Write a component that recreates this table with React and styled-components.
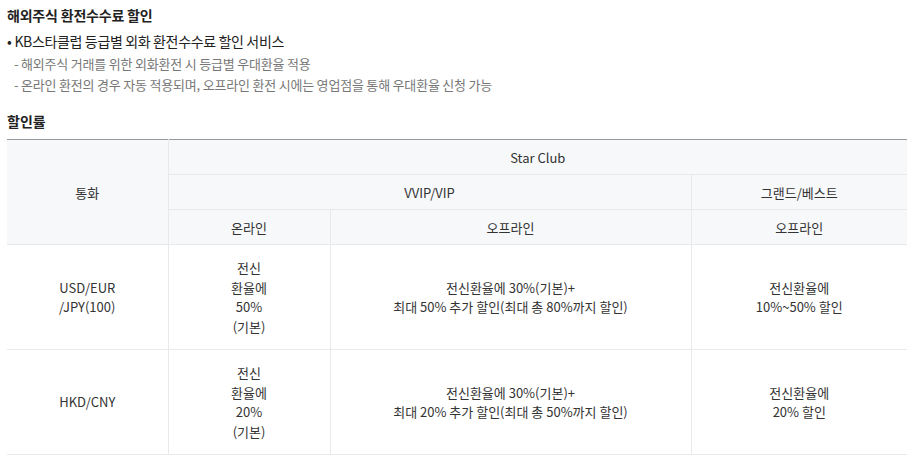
import React from 'react'
import styled, { createGlobalStyle } from 'styled-components'

const GlobalStyle = createGlobalStyle`
  html, body {
    margin: 0;
    padding: 0;
    background: #fff;
  }
  body {
    font-family: 'Noto Sans CJK KR', 'Noto Sans', sans-serif;
    color: #222;
  }
`

const rows = [
  {
    currency: ['USD/EUR', '/JPY(100)'],
    online: ['전신', '환율에', '50%', '(기본)'],
    vip: ['전신환율에 30%(기본)+', '최대 50% 추가 할인(최대 총 80%까지 할인)'],
    grand: ['전신환율에', '10%~50% 할인'],
  },
  {
    currency: ['HKD/CNY'],
    online: ['전신', '환율에', '20%', '(기본)'],
    vip: ['전신환율에 30%(기본)+', '최대 20% 추가 할인(최대 총 50%까지 할인)'],
    grand: ['전신환율에', '20% 할인'],
  },
]

const Lines = ({ items }) =>
  items.map((t, i) => (
    <React.Fragment key={i}>
      {i > 0 && <br />}
      {t}
    </React.Fragment>
  ))

const App = () => {
  return (
    <Page>
      <GlobalStyle />
      <Title>해외주식 환전수수료 할인</Title>
      <Bullet>KB스타클럽 등급별 외화 환전수수료 할인 서비스</Bullet>
      <SubList>
        <li>해외주식 거래를 위한 외화환전 시 등급별 우대환율 적용</li>
        <li>온라인 환전의 경우 자동 적용되며, 오프라인 환전 시에는 영업점을 통해 우대환율 신청 가능</li>
      </SubList>
      <SectionTitle>할인률</SectionTitle>
      <Table>
        <colgroup>
          <col style={{ width: 161 }} />
          <col style={{ width: 162 }} />
          <col style={{ width: 361 }} />
          <col />
        </colgroup>
        <thead>
          <tr>
            <Th rowSpan={3} $first>통화</Th>
            <Th colSpan={3}>Star Club</Th>
          </tr>
          <tr>
            <Th colSpan={2}>VVIP/VIP</Th>
            <Th>그랜드/베스트</Th>
          </tr>
          <tr>
            <Th>온라인</Th>
            <Th>오프라인</Th>
            <Th>오프라인</Th>
          </tr>
        </thead>
        <tbody>
          {rows.map((r, i) => (
            <tr key={i}>
              <Td $first><Lines items={r.currency} /></Td>
              <Td><Lines items={r.online} /></Td>
              <Td><Lines items={r.vip} /></Td>
              <Td><Lines items={r.grand} /></Td>
            </tr>
          ))}
        </tbody>
      </Table>
    </Page>
  )
}

const Page = styled.div`
  padding: 5px 8px 0 7px;
  width: 900px;
`

const Title = styled.h2`
  margin: 0;
  font-size: 14px;
  font-weight: 700;
  line-height: 20px;
  letter-spacing: -0.2px;
  color: #222;
`

const Bullet = styled.p`
  margin: 6px 0 0;
  font-size: 14px;
  line-height: 20px;
  letter-spacing: -0.35px;
  color: #222;
  &::before {
    content: '•';
    margin-right: 3px;
  }
`

const SubList = styled.ul`
  list-style: none;
  margin: 2px 0 0;
  padding: 0 0 0 7px;
  li {
    font-size: 13px;
    line-height: 21px;
    letter-spacing: -0.2px;
    color: #777;
  }
  li::before {
    content: '- ';
  }
`

const SectionTitle = styled.h3`
  margin: 16px 0 0;
  font-size: 14px;
  font-weight: 700;
  line-height: 20px;
  color: #222;
`

const Table = styled.table`
  margin-top: 8px;
  width: 900px;
  border-collapse: collapse;
  table-layout: fixed;
  border-top: 1px solid #999;
  font-size: 13px;
  color: #333;
`

const Th = styled.th`
  height: 34px;
  padding: 0;
  font-weight: 400;
  text-align: center;
  background: #f7f8fa;
  border-bottom: 1px solid #e8e9eb;
  border-left: ${(p) => (p.$first ? 'none' : '1px solid #e8e9eb')};
`

const Td = styled.td`
  height: 104px;
  padding: 0;
  text-align: center;
  line-height: 19.5px;
  border-bottom: 1px solid #e8e9eb;
  border-left: ${(p) => (p.$first ? 'none' : '1px solid #e8e9eb')};
`

export default App
